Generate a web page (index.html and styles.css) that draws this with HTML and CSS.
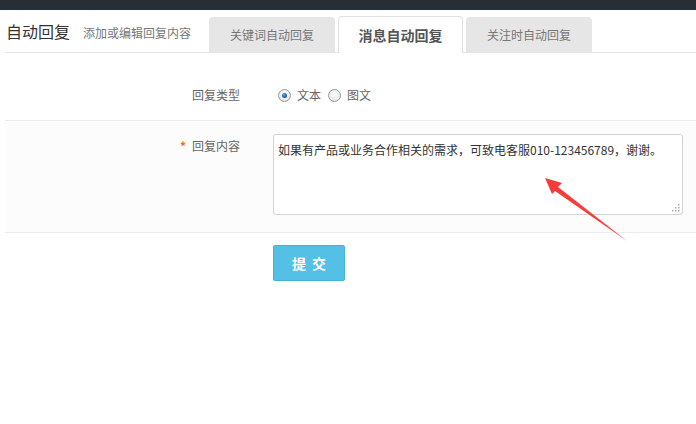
FILE: index.html
```html
<!DOCTYPE html>
<html lang="zh-CN">
<head>
<meta charset="utf-8">
<title>自动回复</title>
<link rel="stylesheet" href="styles.css">
</head>
<body>
<div class="topbar"></div>
<div class="header">
  <div class="title-group">
    <span class="title">自动回复</span>
    <span class="subtitle">添加或编辑回复内容</span>
  </div>
  <div class="tabs">
    <div class="tab">关键词自动回复</div>
    <div class="tab active">消息自动回复</div>
    <div class="tab">关注时自动回复</div>
  </div>
</div>
<div class="form">
  <div class="form-row row-type">
    <div class="label">回复类型</div>
    <div class="control radios">
      <span class="radio checked"></span><span class="radio-text">文本</span>
      <span class="radio"></span><span class="radio-text">图文</span>
    </div>
  </div>
  <div class="form-row row-content">
    <div class="label"><span class="req">*</span>回复内容</div>
    <div class="control">
      <div class="textarea-wrap">
        <textarea class="textarea">如果有产品或业务合作相关的需求，可致电客服010-123456789，谢谢。</textarea>
        <svg class="grip" width="8" height="8" viewBox="0 0 8 8"><g fill="#aaa"><rect x="6" y="0" width="1.5" height="1.5"/><rect x="3" y="3" width="1.5" height="1.5"/><rect x="6" y="3" width="1.5" height="1.5"/><rect x="0" y="6" width="1.5" height="1.5"/><rect x="3" y="6" width="1.5" height="1.5"/><rect x="6" y="6" width="1.5" height="1.5"/></g></svg>
      </div>
    </div>
  </div>
  <div class="actions">
    <button class="btn"><span class="btn-char">提</span><span class="btn-char">交</span></button>
  </div>
</div>
<svg class="arrow" width="696" height="424" viewBox="0 0 696 424">
  <polygon points="545,178 562,183 558,187 627,241 555,191 552,194" fill="#f63b3b"/>
</svg>
</body>
</html>
```
FILE: styles.css
```css
html, body {
  margin: 0;
  padding: 0;
  background: #fff;
  font-family: "Noto Sans CJK SC", "Liberation Sans", sans-serif;
  width: 696px;
  height: 424px;
  overflow: hidden;
  position: relative;
}
.topbar {
  height: 10px;
  background: #282d36;
}
.header {
  display: flex;
  align-items: flex-end;
  margin-left: 5px;
  height: 42px;
  border-bottom: 1px solid #e5e5e5;
}
.title-group {
  width: 204px;
  align-self: center;
  display: flex;
  align-items: baseline;
}
.title {
  font-size: 16px;
  color: #333;
  margin-left: 1px;
  margin-right: 13px;
}
.subtitle {
  font-size: 12px;
  color: #777;
}
.tabs {
  display: flex;
  align-items: flex-end;
}
.tab {
  width: 126px;
  height: 35px;
  margin-right: 3px;
  background: #e6e6e6;
  border-radius: 4px 4px 0 0;
  font-size: 12px;
  color: #777;
  display: flex;
  align-items: center;
  justify-content: center;
}
.tab.active {
  width: 123px;
  height: 36px;
  margin-bottom: -1px;
  background: #fff;
  border: 1px solid #e0e0e0;
  border-bottom: none;
  font-size: 14px;
  font-weight: bold;
  color: #555;
}
.form {
  margin-left: 5px;
}
.form-row {
  display: grid;
  grid-template-columns: 235px 1fr;
  column-gap: 33px;
  align-items: start;
}
.row-type {
  height: 68px;
  padding-top: 32px;
  box-sizing: border-box;
  border-bottom: 1px solid #ececec;
}
.row-content {
  padding: 13px 0 17px;
  background: #fcfcfc;
  border-bottom: 1px solid #ececec;
}
.label {
  text-align: right;
  font-size: 12px;
  line-height: 20px;
  color: #666;
}
.row-content .label {
  padding-top: 2px;
}
.req {
  color: #f60;
  font-weight: bold;
  margin-right: 6px;
}
.radios {
  display: flex;
  align-items: center;
  height: 20px;
  font-size: 12px;
  line-height: 20px;
  color: #666;
}
.radio {
  width: 11px;
  height: 11px;
  border-radius: 50%;
  border: 1px solid #9a9a9a;
  background: radial-gradient(circle at 50% 40%, #fff 0%, #e8e8e8 70%, #d0d0d0 100%);
  margin-left: 5px;
  margin-right: 6px;
  position: relative;
  box-sizing: content-box;
}
.radio.checked::after {
  content: "";
  position: absolute;
  left: 3px;
  top: 3px;
  width: 5px;
  height: 5px;
  border-radius: 50%;
  background: radial-gradient(circle at 40% 35%, #5aa8e8 0%, #1b5fa8 60%, #0d3f78 100%);
}
.radio-text {
  margin-right: 2px;
}
.textarea-wrap {
  position: relative;
  width: 410px;
  height: 81px;
}
.textarea {
  display: block;
  width: 410px;
  height: 81px;
  box-sizing: border-box;
  border: 1px solid #d2d2d2;
  border-radius: 3px;
  padding: 5px 4px;
  font-family: "Noto Sans CJK SC", "Liberation Sans", sans-serif;
  font-size: 12px;
  line-height: 20px;
  color: #333;
  background: #fff;
  resize: none;
  outline: none;
  overflow: hidden;
}
.grip {
  position: absolute;
  right: 3px;
  bottom: 3px;
}
.actions {
  padding: 12px 0 0 268px;
}
.btn {
  width: 72px;
  height: 36px;
  background: #55c0e6;
  border: 1px solid #3fb3da;
  border-radius: 2px;
  color: #fff;
  font-family: "Noto Sans CJK SC", "Liberation Sans", sans-serif;
  font-size: 14px;
  font-weight: bold;
  padding: 0;
  display: inline-flex;
  align-items: center;
  justify-content: center;
  gap: 6px;
}
.arrow {
  position: absolute;
  left: 0;
  top: 0;
  pointer-events: none;
}
```
